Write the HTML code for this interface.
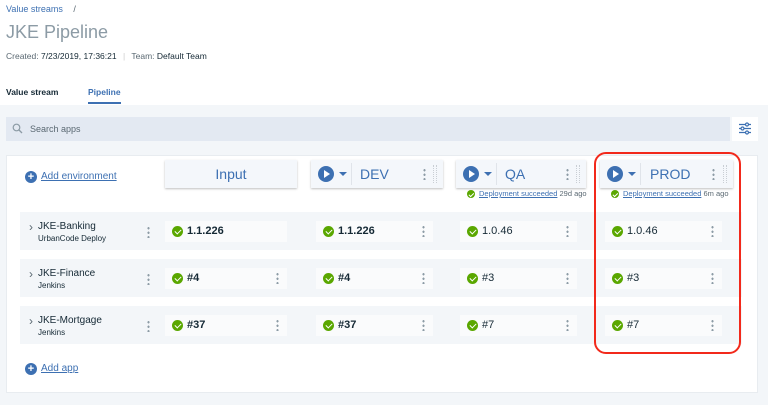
<!DOCTYPE html>
<html><head><style>
*{margin:0;padding:0;box-sizing:border-box}
body{width:768px;height:405px;position:relative;overflow:hidden;background:#f3f6f9;font-family:"Liberation Sans",Arial,sans-serif;color:#152935}
.a{position:absolute}
.hdr{position:absolute;left:0;top:0;width:768px;height:105px;background:#fff}
.env{position:absolute;top:160px;height:28px;background:#f4f7fb;box-shadow:0 1px 2px rgba(0,0,0,.25);color:#3d70b2;font-size:14px}
.play{position:absolute;left:7px;top:6px;width:16px;height:16px;border-radius:50%;background:#3d70b2}
.play:after{content:"";position:absolute;left:6px;top:4px;border-left:6px solid #fff;border-top:4px solid transparent;border-bottom:4px solid transparent}
.caret{position:absolute;left:28px;top:12px;border-top:4px solid #3d70b2;border-left:4px solid transparent;border-right:4px solid transparent}
.sep{position:absolute;left:40px;top:3px;width:1px;height:22px;background:#e0e4ea}
.dots{position:absolute;width:3px;height:12px;background:radial-gradient(circle,#8c9ba5 1px,transparent 1.3px) 0 0/3px 4.5px repeat-y}
.grip{position:absolute;top:5px;width:4px;height:18px;border-left:1px dotted #c9ced4;border-right:1px dotted #c9ced4}
.band{position:absolute;left:20px;width:722px;height:38px;background:#f3f6f9}
.cell{position:absolute;height:21px;background:#fafbfc;font-size:11px;line-height:21px;color:#152935}
.ok{position:absolute;left:7px;top:5px;width:11px;height:11px;border-radius:50%;background:#5aa700}
.ok:after{content:"";position:absolute;left:3.5px;top:2px;width:3px;height:5px;border:solid #fff;border-width:0 1.5px 1.5px 0;transform:rotate(45deg)}
.oks{position:absolute;width:8px;height:8px;border-radius:50%;background:#5aa700}
.oks:after{content:"";position:absolute;left:2.7px;top:1.5px;width:2px;height:3.5px;border:solid #fff;border-width:0 1px 1px 0;transform:rotate(45deg)}
.cell span{position:absolute;left:22px}
.cell .dots{right:8px;top:4px}
.app{position:absolute;left:38px;font-size:10px;color:#152935}
.app small{display:block;font-size:8px;margin-top:2px}
.chev{position:absolute;left:29px;font-size:12px;color:#5a6872}
.plus{position:absolute;width:12px;height:12px;border-radius:50%;background:#3d70b2;color:#fff;font-size:11px;line-height:12px;text-align:center;font-weight:bold}
.lnk{position:absolute;font-size:10px;color:#3d70b2;text-decoration:underline}
</style></head><body>
<div class="hdr"></div>
<div class="a" style="left:6px;top:4px;font-size:9px;color:#3d70b2">Value streams <span style="color:#5a6872;margin-left:8px">/</span></div>
<div class="a" style="left:6px;top:22px;font-size:18px;color:#8c9ba5">JKE Pipeline</div>
<div class="a" style="left:6px;top:51px;font-size:8.5px;color:#5a6872">Created: <span style="color:#152935">7/23/2019, 17:36:21</span> <span style="color:#ccc;margin:0 4px">|</span> Team: <span style="color:#152935">Default Team</span></div>
<div class="a" style="left:6px;top:87px;font-size:8.5px;font-weight:bold;color:#152935">Value stream</div>
<div class="a" style="left:88px;top:87px;font-size:8.5px;font-weight:bold;color:#3d70b2">Pipeline</div>
<div class="a" style="left:88px;top:102px;width:33px;height:2px;background:#3d70b2"></div>

<div class="a" style="left:6px;top:117px;width:724px;height:24px;background:#e3e9f2"></div>
<svg class="a" style="left:12px;top:123px" width="11" height="11"><circle cx="4.5" cy="4.5" r="3.3" fill="none" stroke="#8c9ba5" stroke-width="1.2"/><path d="M7 7l3 3" stroke="#8c9ba5" stroke-width="1.3"/></svg>
<div class="a" style="left:30px;top:124px;font-size:9px;color:#5a6872">Search apps</div>
<div class="a" style="left:732px;top:117px;width:26px;height:24px;background:#fff"></div>
<svg class="a" style="left:739px;top:122px" width="12" height="13"><g stroke="#3d70b2" stroke-width="1.2" fill="#fff"><path d="M0 2.5h12M0 6.5h12M0 10.5h12"/><circle cx="8" cy="2.5" r="1.5"/><circle cx="3.5" cy="6.5" r="1.5"/><circle cx="8" cy="10.5" r="1.5"/></g></svg>

<div class="a" style="left:6px;top:155px;width:752px;height:238px;background:#fff;border:1px solid #e8ecf0"></div>
<div class="plus" style="left:25px;top:171px">+</div>
<div class="lnk" style="left:41px;top:171px">Add environment</div>

<div class="env" style="left:165px;width:132px"><div style="text-align:center;line-height:28px;color:#3d70b2">Input</div></div>
<div class="env" style="left:311px;width:132px"><div class="play"></div><div class="caret"></div><div class="sep"></div><div class="a" style="left:49px;top:6px">DEV</div><div class="dots" style="left:112px;top:8px"></div><div class="grip" style="left:122px"></div></div>
<div class="env" style="left:456px;width:130px"><div class="play"></div><div class="caret"></div><div class="sep"></div><div class="a" style="left:49px;top:6px">QA</div><div class="dots" style="left:110px;top:8px"></div><div class="grip" style="left:120px"></div></div>
<div class="env" style="left:600px;width:133px"><div class="play"></div><div class="caret"></div><div class="sep"></div><div class="a" style="left:50px;top:6px">PROD</div><div class="dots" style="left:112px;top:8px"></div><div class="grip" style="left:123px"></div></div>
<div class="oks" style="left:467px;top:190px"></div>
<div class="a" style="left:479px;top:189px;font-size:7.5px;color:#5a6872"><span style="color:#3d70b2;text-decoration:underline">Deployment succeeded</span> 29d ago</div>
<div class="oks" style="left:611px;top:190px"></div>
<div class="a" style="left:623px;top:189px;font-size:7.5px;color:#5a6872"><span style="color:#3d70b2;text-decoration:underline">Deployment succeeded</span> 6m ago</div>

<div class="band" style="top:212px"></div>
<div class="band" style="top:259px"></div>
<div class="band" style="top:306px"></div>

<div class="chev" style="top:220px">›</div><div class="app" style="top:221px">JKE-Banking<small>UrbanCode Deploy</small></div>
<div class="chev" style="top:267px">›</div><div class="app" style="top:268px">JKE-Finance<small>Jenkins</small></div>
<div class="chev" style="top:314px">›</div><div class="app" style="top:315px">JKE-Mortgage<small>Jenkins</small></div>
<div class="dots" style="left:147px;top:226px"></div>
<div class="dots" style="left:147px;top:273px"></div>
<div class="dots" style="left:147px;top:320px"></div>

<div class="cell" style="left:165px;top:221px;width:122px;font-weight:bold"><div class="ok"></div><span>1.1.226</span></div>
<div class="cell" style="left:316px;top:221px;width:117px;font-weight:bold"><div class="ok"></div><span>1.1.226</span><div class="dots"></div></div>
<div class="cell" style="left:460px;top:221px;width:117px"><div class="ok"></div><span>1.0.46</span><div class="dots"></div></div>
<div class="cell" style="left:605px;top:221px;width:117px"><div class="ok"></div><span>1.0.46</span><div class="dots"></div></div>

<div class="cell" style="left:165px;top:268px;width:122px;font-weight:bold"><div class="ok"></div><span>#4</span><div class="dots"></div></div>
<div class="cell" style="left:316px;top:268px;width:117px;font-weight:bold"><div class="ok"></div><span>#4</span><div class="dots"></div></div>
<div class="cell" style="left:460px;top:268px;width:117px"><div class="ok"></div><span>#3</span><div class="dots"></div></div>
<div class="cell" style="left:605px;top:268px;width:117px"><div class="ok"></div><span>#3</span><div class="dots"></div></div>

<div class="cell" style="left:165px;top:315px;width:122px;font-weight:bold"><div class="ok"></div><span>#37</span><div class="dots"></div></div>
<div class="cell" style="left:316px;top:315px;width:117px;font-weight:bold"><div class="ok"></div><span>#37</span><div class="dots"></div></div>
<div class="cell" style="left:460px;top:315px;width:117px"><div class="ok"></div><span>#7</span><div class="dots"></div></div>
<div class="cell" style="left:605px;top:315px;width:117px"><div class="ok"></div><span>#7</span><div class="dots"></div></div>

<div class="plus" style="left:25px;top:363px">+</div>
<div class="lnk" style="left:41px;top:363px">Add app</div>

<div class="a" style="left:594px;top:152px;width:147px;height:202px;border:2px solid #f2291b;border-radius:12px"></div>
</body></html>
